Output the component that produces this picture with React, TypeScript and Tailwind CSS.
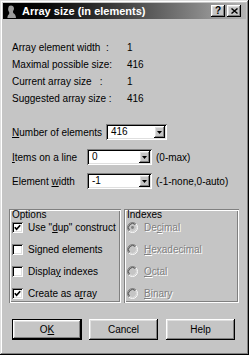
import React from "react";

const raised =
  "shadow-[inset_-1px_-1px_#000,inset_1px_1px_#fff,inset_-2px_-2px_#808080,inset_2px_2px_#dfdfdf]";
const etched =
  "shadow-[inset_1px_1px_#808080,inset_-1px_-1px_#fff,inset_2px_2px_#fff,inset_-2px_-2px_#808080]";
const sunken =
  "shadow-[inset_1px_1px_#808080,inset_-1px_-1px_#fff,inset_2px_2px_#000,inset_-2px_-2px_#dfdfdf]";
const disabledText = "text-[#808080] [text-shadow:1px_1px_0_#fff]";

function AdaIcon() {
  return (
    <svg width="12" height="13" viewBox="0 0 12 13">
      <path
        d="M4 1c2-1.2 5-.4 5 2.6 0 1-.5 2-1 2.6L8.2 8c1.4.9 2.8 2.2 2.8 5H2.4c0-2 .8-3.2 1.8-4V7C3.1 6 2.6 4 4 1z"
        fill="#9c9c9c"
      />
    </svg>
  );
}

function TitleBtn({ children }: { children: React.ReactNode }) {
  return (
    <div className={`w-[14px] h-[12px] bg-[#c5c5c5] ${raised} flex items-center justify-center text-[10px] font-bold leading-none text-black`}>
      {children}
    </div>
  );
}

function Combo({ value, width }: { value: string; width: string }) {
  return (
    <div className={`${width} h-[16px] bg-white ${sunken} flex items-center px-[2px]`}>
      <span className="flex-1 pl-[3px] leading-none">{value}</span>
      <div className={`w-[11px] h-[12px] bg-[#c5c5c5] ${raised} flex items-center justify-center`}>
        <svg width="5" height="3" viewBox="0 0 5 3">
          <path d="M0 0h5L2.5 3z" fill="#000" />
        </svg>
      </div>
    </div>
  );
}

function Check({ checked, children }: { checked?: boolean; children: React.ReactNode }) {
  return (
    <div className="h-[14px] flex items-center">
      <div className={`w-[11px] h-[11px] bg-white ${sunken} flex items-center justify-center`}>
        {checked && (
          <svg width="7" height="7" viewBox="0 0 7 7">
            <polyline points="0.8,3.2 2.6,5.2 6.2,1.2" fill="none" stroke="#000" strokeWidth="1.7" />
          </svg>
        )}
      </div>
      <span className="ml-[5px]">{children}</span>
    </div>
  );
}

function Radio({ selected, children }: { selected?: boolean; children: React.ReactNode }) {
  return (
    <div className="h-[14px] flex items-center">
      <svg width="11" height="11" viewBox="0 0 12 12">
        <circle cx="6" cy="6" r="5" fill="#c5c5c5" />
        <path d="M2.11 9.89A5.5 5.5 0 0 1 9.89 2.11" fill="none" stroke="#808080" />
        <path d="M9.89 2.11A5.5 5.5 0 0 1 2.11 9.89" fill="none" stroke="#fff" />
        <path d="M2.82 9.18A4.5 4.5 0 0 1 9.18 2.82" fill="none" stroke="#404040" />
        <path d="M9.18 2.82A4.5 4.5 0 0 1 2.82 9.18" fill="none" stroke="#dfdfdf" />
        {selected && <circle cx="6" cy="6" r="1.6" fill="#808080" />}
      </svg>
      <span className={`ml-[6px] ${disabledText}`}>{children}</span>
    </div>
  );
}

function Button({ children, isDefault }: { children: React.ReactNode; isDefault?: boolean }) {
  if (isDefault) {
    return (
      <div className="w-[70px] h-[21px] border border-black">
        <div className={`w-full h-full bg-[#c5c5c5] ${raised} flex items-center justify-center`}>{children}</div>
      </div>
    );
  }
  return (
    <div className={`w-[69px] h-[21px] bg-[#c5c5c5] ${raised} flex items-center justify-center`}>{children}</div>
  );
}

export default function App() {
  return (
    <div className="w-[249px] h-[355px] bg-[#c5c5c5] p-[3px] font-['Liberation_Sans',Arial,sans-serif] text-[10px] text-black shadow-[inset_-1px_-1px_#000,inset_1px_1px_#dfdfdf,inset_-2px_-2px_#808080,inset_2px_2px_#fff]">
      {/* Title bar */}
      <div className="h-[16px] flex items-center bg-gradient-to-r from-black to-[#b4b4b4] pl-[2px] pr-[5px]">
        <AdaIcon />
        <span className="ml-[5px] text-white font-bold text-[11px] leading-none">Array size (in elements)</span>
        <div className="ml-auto flex gap-[2px]">
          <TitleBtn>?</TitleBtn>
          <TitleBtn>
            <svg width="7" height="6" viewBox="0 0 7 6">
              <path d="M0.5 0.5l6 5M6.5 0.5l-6 5" stroke="#000" strokeWidth="1.4" />
            </svg>
          </TitleBtn>
        </div>
      </div>

      {/* Info */}
      <div className="mt-[20px] pl-[9px] grid grid-cols-[115px_1fr] leading-[17px]">
        <span>Array element width&nbsp; :</span>
        <span>1</span>
        <span>Maximal possible size:</span>
        <span>416</span>
        <span>Current array size&nbsp;&nbsp; :</span>
        <span>1</span>
        <span>Suggested array size :</span>
        <span>416</span>
      </div>

      {/* Fields */}
      <div className="mt-[17px] pl-[9px] flex items-center h-[16px]">
        <span className="w-[94px]">
          <u>N</u>umber of elements
        </span>
        <Combo value="416" width="w-[61px]" />
      </div>
      <div className="mt-[9px] pl-[9px] flex items-center h-[16px]">
        <span className="w-[75px]">
          <u>I</u>tems on a line
        </span>
        <Combo value="0" width="w-[65px]" />
        <span className="ml-[4px]">(0-max)</span>
      </div>
      <div className="mt-[8px] pl-[9px] flex items-center h-[16px]">
        <span className="w-[75px]">
          Element <u>w</u>idth
        </span>
        <Combo value="-1" width="w-[65px]" />
        <span className="ml-[4px]">(-1-none,0-auto)</span>
      </div>

      {/* Groups */}
      <div className="mt-[20px] ml-[6px] flex gap-[3px]">
        <div className={`w-[112px] h-[94px] ${etched} px-[3px] pt-[1px] flex flex-col`}>
          <span className="leading-[10px]">Options</span>
          <div className="flex flex-col gap-[8px]">
            <Check checked>
              Use "<u>d</u>up" construct
            </Check>
            <Check>Signed elements</Check>
            <Check>
              Displa<u>y</u> indexes
            </Check>
            <Check checked>
              Create as a<u>r</u>ray
            </Check>
          </div>
        </div>
        <div className={`w-[115px] h-[94px] ${etched} px-[3px] pt-[1px] flex flex-col`}>
          <span className="leading-[10px]">Indexes</span>
          <div className="flex flex-col gap-[8px]">
            <Radio selected>
              De<u>c</u>imal
            </Radio>
            <Radio>
              <u>H</u>exadecimal
            </Radio>
            <Radio>
              <u>O</u>ctal
            </Radio>
            <Radio>
              <u>B</u>inary
            </Radio>
          </div>
        </div>
      </div>

      {/* Buttons */}
      <div className="mt-[16px] ml-[9px] flex">
        <Button isDefault>
          O<u>K</u>
        </Button>
        <div className="ml-[7px]">
          <Button>Cancel</Button>
        </div>
        <div className="ml-[8px]">
          <Button>Help</Button>
        </div>
      </div>
    </div>
  );
}
